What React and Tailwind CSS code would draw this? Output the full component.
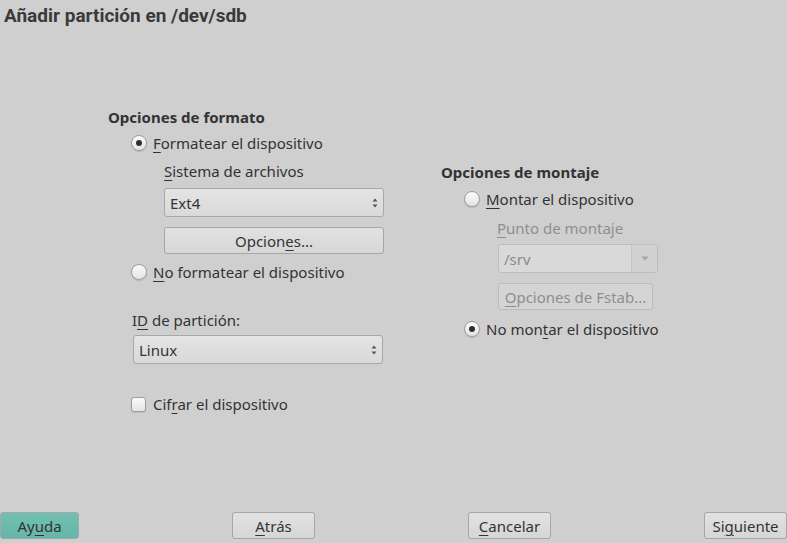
import React from "react";

const font = { fontFamily: '"Noto Sans", "Open Sans", sans-serif' };

function Radio({ checked, label, disabled }) {
  return (
    <div className="flex items-center h-[20px]">
      <div className="w-[16px] h-[16px] rounded-full border border-[#9c9c9c] bg-gradient-to-b from-[#fbfbfb] to-[#e4e4e4] shadow-[0_1px_1px_rgba(0,0,0,0.12)] flex items-center justify-center shrink-0">
        {checked && <div className="w-[6px] h-[6px] rounded-full bg-[#2e2e2e]" />}
      </div>
      <span className={"ml-[6px] text-[15px] leading-[20px] " + (disabled ? "text-[#8c8c8c]" : "text-[#333333]")}>{label}</span>
    </div>
  );
}

function U({ children }) {
  return <span className="underline decoration-1 underline-offset-[3px]">{children}</span>;
}

function Spin() {
  return (
    <svg width="6" height="12" viewBox="0 0 6 12" className="shrink-0">
      <path d="M0.5 4.5 L3 1.5 L5.5 4.5 Z" fill="#555" />
      <path d="M0.5 7.5 L3 10.5 L5.5 7.5 Z" fill="#555" />
    </svg>
  );
}

function Select({ value, width }) {
  return (
    <div className={"h-[29px] rounded-[3px] border border-[#a8a8a8] bg-gradient-to-b from-[#e4e4e4] to-[#d9d9d9] flex items-center justify-between pl-[5px] pr-[5px] " + width}>
      <span className="text-[15px] text-[#333333] leading-[20px]">{value}</span>
      <Spin />
    </div>
  );
}

function Btn({ children, className = "" }) {
  return (
    <div className={"h-[27px] rounded-[3px] border border-[#a6a6a6] flex items-center justify-center text-[15px] leading-[20px] " + className}>
      {children}
    </div>
  );
}

export default function App() {
  return (
    <div className="w-[787px] h-[543px] bg-[#cfcfcf] flex flex-col overflow-hidden" style={font}>
      <div className="pl-[4px] pt-[4px] h-[30px] text-[19px] leading-[23px] font-bold text-[#3a3a3a]" style={{ fontFamily: 'Roboto, "Noto Sans", sans-serif' }}>
        Añadir partición en /dev/sdb
      </div>
      <div className="flex-1 flex items-start">
        {/* Left column */}
        <div className="ml-[108px] mt-[77px] flex flex-col w-[280px]">
          <div className="text-[15px] leading-[20px] font-bold text-[#333333]">Opciones de formato</div>
          <div className="ml-[23px] mt-[6px]">
            <Radio checked label={<><U>F</U>ormatear el dispositivo</>} />
          </div>
          <div className="ml-[56px] mt-[8px] text-[15px] leading-[20px] text-[#333333]"><U>S</U>istema de archivos</div>
          <div className="ml-[56px] mt-[7px]">
            <Select value="Ext4" width="w-[220px]" />
          </div>
          <div className="ml-[56px] mt-[10px]">
            <Btn className="w-[220px] bg-gradient-to-b from-[#e2e2e2] to-[#d6d6d6] text-[#333333]">Opcion<U>e</U>s...</Btn>
          </div>
          <div className="ml-[23px] mt-[8px]">
            <Radio label={<><U>N</U>o formatear el dispositivo</>} />
          </div>
          <div className="ml-[24px] mt-[28px] text-[15px] leading-[20px] text-[#333333]">I<U>D</U> de partición:</div>
          <div className="ml-[25px] mt-[5px]">
            <Select value="Linux" width="w-[250px]" />
          </div>
          <div className="ml-[23px] mt-[30px] flex items-center h-[20px]">
            <div className="w-[15px] h-[15px] rounded-[3px] border border-[#9c9c9c] bg-gradient-to-b from-[#fbfbfb] to-[#e4e4e4] shadow-[0_1px_1px_rgba(0,0,0,0.1)] shrink-0" />
            <span className="ml-[7px] text-[15px] leading-[20px] text-[#333333]">Cif<U>r</U>ar el dispositivo</span>
          </div>
        </div>
        {/* Right column */}
        <div className="ml-[53px] mt-[132px] flex flex-col w-[260px]">
          <div className="text-[15px] leading-[20px] font-bold text-[#333333]">Opciones de montaje</div>
          <div className="ml-[23px] mt-[7px]">
            <Radio label={<><U>M</U>ontar el dispositivo</>} />
          </div>
          <div className="ml-[56px] mt-[9px] text-[15px] leading-[20px] text-[#8e8e8e]"><U>P</U>unto de montaje</div>
          <div className="ml-[57px] mt-[6px] w-[160px] h-[29px] rounded-[3px] border border-[#bdbdbd] bg-[#d9d9d9] flex">
            <div className="flex-1 flex items-center pl-[5px] text-[15px] leading-[20px] text-[#8a8a8a]">/srv</div>
            <div className="w-[26px] border-l border-[#c4c4c4] bg-[#d2d2d2] flex items-center justify-center">
              <svg width="8" height="5" viewBox="0 0 8 5"><path d="M0.5 0.5 L7.5 0.5 L4 4.5 Z" fill="#a4a4a4" /></svg>
            </div>
          </div>
          <div className="ml-[57px] mt-[10px]">
            <Btn className="w-[155px] border-[#bcbcbc] bg-[#d4d4d4] text-[#8e8e8e]"><U>O</U>pciones de Fstab...</Btn>
          </div>
          <div className="ml-[23px] mt-[9px]">
            <Radio checked label={<>No mon<U>t</U>ar el dispositivo</>} />
          </div>
        </div>
      </div>
      <div className="h-[31px] flex justify-between items-start">
        <Btn className="w-[79px] bg-gradient-to-b from-[#71bfb3] to-[#66b5a9] border-[#5a9c92] text-[#333333]">Ay<U>u</U>da</Btn>
        <Btn className="w-[83px] bg-gradient-to-b from-[#e2e2e2] to-[#d6d6d6] text-[#333333]"><U>A</U>trás</Btn>
        <Btn className="w-[83px] bg-gradient-to-b from-[#e2e2e2] to-[#d6d6d6] text-[#333333]"><U>C</U>ancelar</Btn>
        <Btn className="w-[83px] bg-gradient-to-b from-[#e2e2e2] to-[#d6d6d6] text-[#333333]">Si<U>g</U>uiente</Btn>
      </div>
    </div>
  );
}
